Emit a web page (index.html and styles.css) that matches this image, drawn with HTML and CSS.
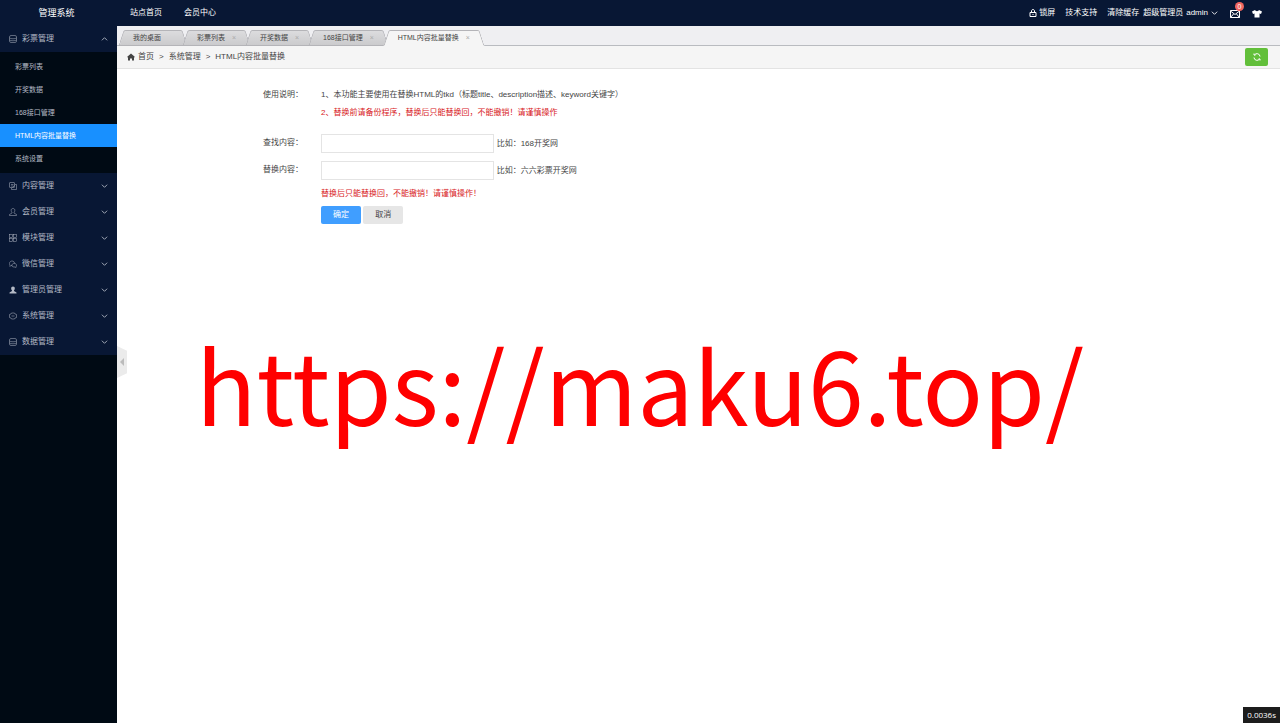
FILE: index.html
```html
<!DOCTYPE html>
<html lang="zh-CN">
<head>
    <meta charset="UTF-8" />
    <title>管理系统</title>
    <link rel="stylesheet" href="styles.css">
</head>
<body>

<!-- shared icons -->
<svg class="sprite" aria-hidden="true">
    <symbol id="i-data" viewBox="0 0 16 16"><rect x="1" y="1" width="14" height="14" rx="3"/><path d="M1 6c2 2 12 2 14 0M1 10c2 2 12 2 14 0"/></symbol>
    <symbol id="i-copy" viewBox="0 0 16 16"><rect x="1" y="1" width="10" height="10" rx="1"/><path d="M12 5h3v10H5v-3M4 5h5M4 8h5M7 11l4-4"/></symbol>
    <symbol id="i-user" viewBox="0 0 16 16"><path d="M8 1C3 1 4 7 6 9v1l-5 3v2h14v-2l-5-3V9c2-2 3-8-2-8z"/></symbol>
    <symbol id="i-grid" viewBox="0 0 16 16"><rect x="1" y="1" width="6" height="6"/><rect x="9" y="1" width="6" height="6"/><rect x="1" y="9" width="6" height="6"/><rect x="9" y="9" width="6" height="6"/></symbol>
    <symbol id="i-chat" viewBox="0 0 16 16"><path d="M6 11H4l-2 2v-3C-1 7 2 2 6 2c3 0 5 2 5 5M6 11c0-6 9-6 9 0 0 1 0 2-1 2v2l-2-1c-3 0-6 0-6-3z"/></symbol>
    <symbol id="i-gear" viewBox="0 0 16 16"><path d="M5 2h6l1 2 3 1v6l-3 1-1 2H5l-1-2-3-1V5l3-1z"/><path d="M5 8h6"/></symbol>
    <symbol id="i-down" viewBox="0 0 16 16"><path d="M2 5l6 6 6-6"/></symbol>
    <symbol id="i-up" viewBox="0 0 16 16"><path d="M2 11l6-6 6 6"/></symbol>
</svg>

<header class="topbar">
    <h1 class="brand">管理系统</h1>
    <nav class="top-links">
        <a href="#">站点首页</a>
        <a href="#">会员中心</a>
    </nav>
    <div class="top-tools">
        <a href="#"><svg class="icon" viewBox="0 0 16 16"><path d="M2 7h12v8H2zM5 7V4c0-4 6-4 6 0v3M8 10v2"/></svg>锁屏</a>
        <a href="#">技术支持</a>
        <a href="#">清除缓存</a>
        <a class="account" href="#"><span>超级管理员</span><span>admin</span><svg class="icon"><use href="#i-down"/></svg></a>
        <a class="mail" href="#" aria-label="消息">
            <svg class="icon" viewBox="0 0 20 18"><path d="M1 3h18v14H1zM1 4l9 7 9-7M1 17l6-7M19 17l-6-7"/></svg>
            <span class="badge">0</span>
        </a>
        <a class="skin" href="#" aria-label="皮肤"><svg class="icon solid" viewBox="0 0 20 18"><path d="M6 2c1 3 7 3 8 0l6 3-2 5-3-1v8H5V9l-3 1-2-5z"/></svg></a>
    </div>
</header>

<div class="layout">
    <aside class="sidebar">
        <nav>
            <a class="group" href="#"><svg class="icon"><use href="#i-data"/></svg>彩票管理<svg class="icon arrow"><use href="#i-up"/></svg></a>
            <ul class="submenu">
                <li><a href="#">彩票列表</a></li>
                <li><a href="#">开奖数据</a></li>
                <li><a href="#">168接口管理</a></li>
                <li><a class="current" href="#">HTML内容批量替换</a></li>
                <li><a href="#">系统设置</a></li>
            </ul>
            <a class="group" href="#"><svg class="icon"><use href="#i-copy"/></svg>内容管理<svg class="icon arrow"><use href="#i-down"/></svg></a>
            <a class="group" href="#"><svg class="icon"><use href="#i-user"/></svg>会员管理<svg class="icon arrow"><use href="#i-down"/></svg></a>
            <a class="group" href="#"><svg class="icon"><use href="#i-grid"/></svg>模块管理<svg class="icon arrow"><use href="#i-down"/></svg></a>
            <a class="group" href="#"><svg class="icon"><use href="#i-chat"/></svg>微信管理<svg class="icon arrow"><use href="#i-down"/></svg></a>
            <a class="group" href="#"><svg class="icon solid"><use href="#i-user"/></svg>管理员管理<svg class="icon arrow"><use href="#i-down"/></svg></a>
            <a class="group" href="#"><svg class="icon"><use href="#i-gear"/></svg>系统管理<svg class="icon arrow"><use href="#i-down"/></svg></a>
            <a class="group" href="#"><svg class="icon"><use href="#i-data"/></svg>数据管理<svg class="icon arrow"><use href="#i-down"/></svg></a>
        </nav>
        <button class="collapse" type="button" aria-label="收起菜单"></button>
    </aside>

    <main class="main">
        <div class="tabs">
            <a class="tab home" href="#">我的桌面</a>
            <a class="tab" href="#">彩票列表<span class="close">×</span></a>
            <a class="tab" href="#">开奖数据<span class="close">×</span></a>
            <a class="tab" href="#">168接口管理<span class="close">×</span></a>
            <a class="tab active" href="#">HTML内容批量替换<span class="close">×</span></a>
        </div>

        <div class="crumbs">
            <svg class="icon solid" viewBox="0 0 16 16"><path d="M8 1l8 7-1 1-1-1v7h-4v-4H6v4H2V8L1 9 0 8z"/></svg>
            <a href="#">首页</a>
            <span>&gt;</span>
            <span>系统管理</span>
            <span>&gt;</span>
            <span>HTML内容批量替换</span>
            <button class="refresh" type="button" aria-label="刷新">
                <svg class="icon" viewBox="0 0 16 16"><path d="M2 9a6 6 0 0 0 11 3M14 7A6 6 0 0 0 3 4M14 15v-3h-3M2 1v3h3"/></svg>
            </button>
        </div>

        <form class="form">
            <div class="row">
                <span class="label">使用说明：</span>
                <div class="notes">
                    <p>1、本功能主要使用在替换HTML的tkd（标题title、description描述、keyword关键字）</p>
                    <p class="warn">2、替换前请备份程序，替换后只能替换回，不能撤销！请谨慎操作</p>
                </div>
            </div>
            <div class="row">
                <label class="label" for="find">查找内容：</label>
                <div class="field"><input type="text" id="find"><span>比如：168开奖网</span></div>
            </div>
            <div class="row">
                <label class="label" for="replace">替换内容：</label>
                <div class="field"><input type="text" id="replace"><span>比如：六六彩票开奖网</span></div>
            </div>
            <div class="row">
                <div class="actions">
                    <p class="warn">替换后只能替换回，不能撤销！请谨慎操作！</p>
                    <button class="btn primary" type="submit">确定</button>
                    <button class="btn" type="reset">取消</button>
                </div>
            </div>
        </form>
    </main>
</div>

<div class="watermark">https://maku6.top/</div>
<div class="timer">0.0036s</div>

</body>
</html>
```
FILE: styles.css
```css
* {
    box-sizing: border-box;
}

body {
    margin: 0;
    min-height: 100vh;
    display: flex;
    flex-direction: column;
    background: #fff;
    color: #444;
    font: 8px/12px "Liberation Sans", "Noto Sans CJK SC", sans-serif;
}

a {
    color: inherit;
    text-decoration: none;
}

p,
ul {
    margin: 0;
    padding: 0;
    list-style: none;
}

button {
    border: 0;
    padding: 0;
    font: inherit;
    cursor: pointer;
}

.sprite {
    display: none;
}

.icon {
    flex: none;
    width: 8px;
    height: 8px;
    fill: none;
    stroke: currentColor;
    stroke-width: 2;
}

.solid {
    fill: currentColor;
    stroke: none;
}

/* Top bar */
.topbar {
    display: flex;
    align-items: center;
    height: 26px;
    background: #081734;
    color: #fff;
}

.brand {
    width: 117px;
    margin: 0;
    padding-right: 4px;
    font-size: 9px;
    font-weight: 400;
    text-align: center;
}

.top-links {
    display: flex;
    gap: 22px;
    padding-left: 13px;
}

.top-tools {
    display: flex;
    align-items: center;
    gap: 10px;
    margin-left: auto;
    padding-right: 18px;
}

.top-tools a {
    display: flex;
    align-items: center;
    gap: 2px;
}

.top-tools .account {
    gap: 3px;
    margin-left: -6px;
}

.account .icon {
    width: 7px;
}

.mail,
.skin {
    position: relative;
    margin-left: 2px;
}

.mail .icon,
.skin .icon {
    width: 10px;
    height: 9px;
}

.badge {
    position: absolute;
    top: -7px;
    right: -4px;
    width: 9px;
    height: 9px;
    border-radius: 50%;
    background: #f0655f;
    font-size: 7px;
    line-height: 9px;
    text-align: center;
}

/* Sidebar */
.layout {
    flex: 1;
    display: flex;
}

.sidebar {
    position: relative;
    width: 117px;
    background: #000a14;
    color: #b4bac6;
}

.group {
    display: flex;
    align-items: center;
    gap: 5px;
    height: 26px;
    padding: 0 9px;
    background: #081734;
}

.group .icon {
    stroke-width: 1;
}

.group .arrow {
    width: 7px;
    margin-left: auto;
    stroke-width: 2;
}

.submenu {
    padding: 3px 0;
    font-size: 7px;
}

.submenu a {
    display: block;
    padding-left: 15px;
    line-height: 23px;
}

.submenu .current {
    background: #1890ff;
    color: #fff;
}

.collapse {
    position: absolute;
    top: 320px;
    left: 100%;
    width: 10px;
    height: 32px;
    background: #ebebeb;
    clip-path: polygon(0 0, 100% 15%, 100% 85%, 0 100%);
}

.collapse::before {
    content: "";
    display: block;
    width: 0;
    margin-left: 3px;
    border: 4px solid transparent;
    border-left-width: 0;
    border-right-color: #bbb;
}

/* Tabs */
.main {
    flex: 1;
    min-width: 0;
}

.tabs {
    display: flex;
    height: 20px;
    padding: 4px 0 0 4px;
    border-bottom: 1px solid #b9bbc0;
    background: #efeff2;
    font-size: 7px;
}

.tab {
    position: relative;
    display: flex;
    align-items: center;
    gap: 7px;
    height: 16px;
    padding: 0 11px 0 12px;
    z-index: 0;
}

.home {
    padding-right: 24px;
}

/* two overlapping skewed halves make the slanted tab shape */
.tab::before,
.tab::after {
    content: "";
    position: absolute;
    top: 0;
    bottom: 0;
    z-index: -1;
    border: 1px solid #b4b4b8;
    background: linear-gradient(#dcdcde, #cbcbcd);
}

.tab::before {
    left: 0;
    right: 40%;
    border-right: 0;
    border-top-left-radius: 2px;
    transform: skewX(-18deg);
}

.tab::after {
    left: 40%;
    right: 0;
    border-left: 0;
    border-top-right-radius: 2px;
    transform: skewX(18deg);
}

.active {
    z-index: 1;
}

.active::before,
.active::after {
    border-bottom-color: #f5f5f5;
    background: #f5f5f5;
}

.close {
    width: 5px;
    color: #aaa;
}

/* Breadcrumb */
.crumbs {
    display: flex;
    align-items: center;
    gap: 5px;
    height: 23px;
    padding: 0 12px 0 10px;
    border-bottom: 1px solid #e3e3e3;
    background: #f5f5f5;
}

.crumbs a {
    margin-left: -2px;
}

.refresh {
    display: flex;
    align-items: center;
    justify-content: center;
    width: 23px;
    height: 18px;
    margin-left: auto;
    border-radius: 2px;
    background: #62bf3a;
    color: #fff;
}

/* Form */
.form {
    display: grid;
    gap: 8px;
    padding-top: 17px;
}

.row {
    display: grid;
    grid-template-columns: 16% 1fr;
    column-gap: 18px;
}

.label {
    line-height: 18px;
    text-align: right;
}

.notes {
    padding-bottom: 4px;
    line-height: 18px;
}

.warn {
    color: #d8201c;
}

.field {
    display: flex;
    align-items: center;
    gap: 3px;
    line-height: 18px;
}

.field input {
    width: 18%;
    height: 19px;
    padding: 0 4px;
    border: 1px solid #e4e4e4;
    font: inherit;
}

.actions {
    grid-column: 2;
}

.actions .warn {
    padding-bottom: 6px;
}

.btn {
    width: 40px;
    height: 18px;
    border-radius: 2px;
    background: #e6e6e6;
    color: #444;
}

.primary {
    background: #409eff;
    color: #fff;
}

/* Overlays */
.watermark {
    position: absolute;
    top: 53%;
    left: 50%;
    transform: translate(-50%, -50%);
    color: #f00;
    font: 100px/150px "Noto Sans CJK SC", sans-serif;
    white-space: nowrap;
    pointer-events: none;
}

.timer {
    position: fixed;
    right: 0;
    bottom: 0;
    padding: 2px 4px;
    background: #1c1c1c;
    color: #fff;
    font-family: "Open Sans", sans-serif;
}
```
